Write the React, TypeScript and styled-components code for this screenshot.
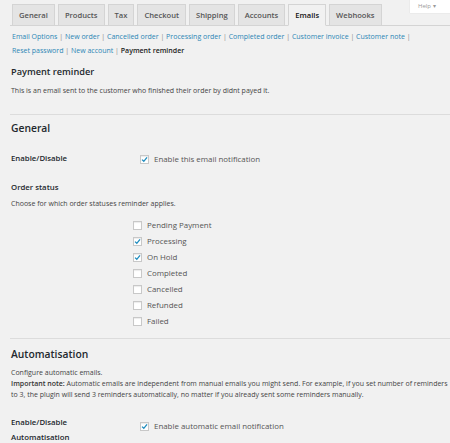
import { createGlobalStyle } from 'styled-components';
import styled from 'styled-components';

const GlobalStyle = createGlobalStyle`
    html, body {
        margin: 0;
        padding: 0;
        background: #f1f1f1;
        font-family: "Open Sans", "Liberation Sans", sans-serif;
        color: #444;
    }
    * { box-sizing: border-box; }
`

const Page = styled.div`
    position: relative;
    width: 450px;
    height: 443px;
    overflow: hidden;
`

const HelpTab = styled.div`
    position: absolute;
    top: 0;
    right: 0;
    width: 40px;
    height: 13px;
    background: #fff;
    box-shadow: 0 0 1px rgba(0, 0, 0, 0.15);
    color: #9a9a9a;
    font-size: 6px;
    line-height: 12px;
    padding-left: 8px;
`

const TabBar = styled.div`
    margin-left: 10px;
    padding: 4px 0 0 2px;
    display: flex;
    gap: 3px;
    border-bottom: 1px solid #d4d4d4;
`

const Tab = styled.div<{ $active?: boolean }>`
    height: 22px;
    margin-bottom: -1px;
    padding: 0 6px;
    display: flex;
    align-items: center;
    background: ${p => (p.$active ? '#f1f1f1' : '#e4e4e4')};
    border: 1px solid #d4d4d4;
    border-bottom-color: ${p => (p.$active ? '#f1f1f1' : '#d4d4d4')};
    color: ${p => (p.$active ? '#111' : '#555')};
    font-size: 7.6px;
    font-weight: 600;
`

const SubNav = styled.div`
    margin-top: 4px;
    padding: 0 12px;
    font-size: 7px;
    line-height: 14px;
    color: #888;
    white-space: nowrap;
`

const NavLink = styled.span`
    color: #2b86b5;
`

const Current = styled.span`
    color: #222;
    font-weight: 600;
`

const Content = styled.div`
    padding-left: 11px;
`

const SubHeading = styled.div<{ $top: number }>`
    margin-top: ${p => p.$top}px;
    font-size: 9.2px;
    line-height: 12px;
    font-weight: 600;
    color: #23282d;
`

const Heading = styled.div<{ $top: number }>`
    margin-top: ${p => p.$top}px;
    font-size: 10.3px;
    line-height: 14px;
    font-weight: 600;
    color: #23282d;
`

const Desc = styled.div<{ $top: number; $lh?: number }>`
    margin-top: ${p => p.$top}px;
    font-size: 7px;
    line-height: ${p => p.$lh ?? 10}px;
    color: #444;
    white-space: nowrap;

    b { font-weight: 600; color: #333; }
`

const Rule = styled.div<{ $top: number }>`
    margin-top: ${p => p.$top}px;
    margin-left: 10px;
    height: 1px;
    background: #dcdcdc;
`

const FieldRow = styled.div<{ $top: number }>`
    margin-top: ${p => p.$top}px;
    display: flex;
    align-items: flex-start;
`

const FieldLabel = styled.div`
    width: 129px;
    font-size: 7.8px;
    line-height: 15px;
    font-weight: 600;
    color: #23282d;
`

const FieldValue = styled.div<{ $shift?: number }>`
    margin-top: ${p => p.$shift ?? 0}px;
`

const StatusList = styled.div`
    margin-top: 8px;
    margin-left: 122px;
    display: flex;
    flex-direction: column;
`

const CheckLine = styled.div`
    height: 16px;
    display: flex;
    align-items: center;
    gap: 5px;
    font-size: 7.9px;
    color: #555;
`

const Box = styled.span`
    width: 9px;
    height: 9px;
    background: #fff;
    border: 1px solid #c8c8c8;
    box-shadow: inset 0 1px 1px rgba(0, 0, 0, 0.08);
    display: flex;
    align-items: center;
    justify-content: center;
`

const Check = ({ on }: { on?: boolean }) => (
    <Box>
        {on && (
            <svg width="7" height="7" viewBox="0 0 10 10">
                <path d="M1.5 5.2 L4 7.6 L8.6 2" fill="none" stroke="#1e8cbe" strokeWidth="1.9" />
            </svg>
        )}
    </Box>
)

const tabs = ['General', 'Products', 'Tax', 'Checkout', 'Shipping', 'Accounts', 'Emails', 'Webhooks']

const statuses: [string, boolean][] = [
    ['Pending Payment', false],
    ['Processing', true],
    ['On Hold', true],
    ['Completed', false],
    ['Cancelled', false],
    ['Refunded', false],
    ['Failed', false],
]

const links1 = ['Email Options', 'New order', 'Cancelled order', 'Processing order', 'Completed order', 'Customer invoice', 'Customer note']

export default function App() {
    return (
        <Page>
            <GlobalStyle />
            <HelpTab>Help ▾</HelpTab>
            <TabBar>
                {tabs.map(t => (
                    <Tab key={t} $active={t === 'Emails'}>{t}</Tab>
                ))}
            </TabBar>
            <SubNav>
                {links1.map(l => (
                    <span key={l}><NavLink>{l}</NavLink> | </span>
                ))}
                <br />
                <NavLink>Reset password</NavLink> | <NavLink>New account</NavLink> | <Current>Payment reminder</Current>
            </SubNav>
            <Content>
                <SubHeading $top={8}>Payment reminder</SubHeading>
                <Desc $top={8}>This is an email sent to the customer who finished their order by didnt payed it.</Desc>
            </Content>
            <Rule $top={18} />
            <Content>
                <Heading $top={6}>General</Heading>
                <FieldRow $top={16}>
                    <FieldLabel>Enable/Disable</FieldLabel>
                    <FieldValue>
                        <CheckLine>
                            <Check on />
                            Enable this email notification
                        </CheckLine>
                    </FieldValue>
                </FieldRow>
                <FieldRow $top={13}>
                    <FieldLabel>Order status</FieldLabel>
                </FieldRow>
                <Desc $top={4}>Choose for which order statuses reminder applies.</Desc>
                <StatusList>
                    {statuses.map(([s, on]) => (
                        <CheckLine key={s}>
                            <Check on={on} />
                            {s}
                        </CheckLine>
                    ))}
                </StatusList>
            </Content>
            <Rule $top={9} />
            <Content>
                <Heading $top={8}>Automatisation</Heading>
                <Desc $top={6} $lh={11}>
                    Configure automatic emails.
                    <br />
                    <b>Important note:</b> Automatic emails are independent from manual emails you might send. For example, if you set number of reminders
                    <br />
                    to 3, the plugin will send 3 reminders automatically, no matter if you already sent some reminders manually.
                </Desc>
                <FieldRow $top={15}>
                    <FieldLabel>
                        Enable/Disable
                        <br />
                        Automatisation
                    </FieldLabel>
                    <FieldValue $shift={3}>
                        <CheckLine>
                            <Check on />
                            Enable automatic email notification
                        </CheckLine>
                    </FieldValue>
                </FieldRow>
            </Content>
        </Page>
    )
}
